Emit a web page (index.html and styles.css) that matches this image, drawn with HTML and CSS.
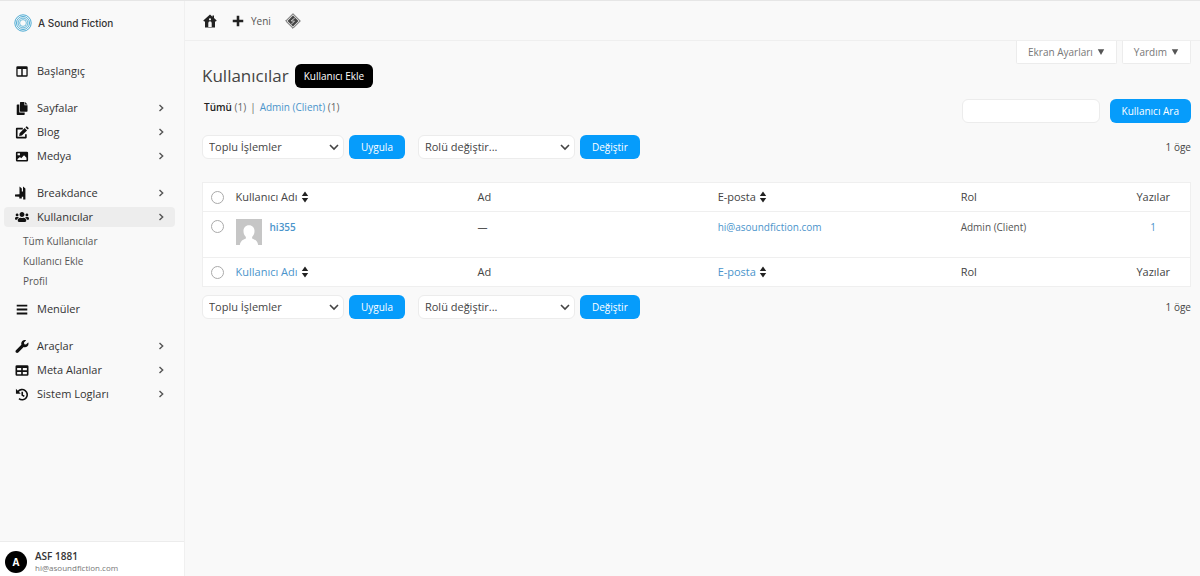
FILE: index.html
```html
<!DOCTYPE html>
<html lang="tr">
<head>
    <meta charset="UTF-8">
    <meta name="viewport" content="width=device-width, initial-scale=1.0">
    <title>Kullanıcılar - A Sound Fiction</title>
    <link rel="stylesheet" href="styles.css">
</head>
<body>
    <svg class="sprite" aria-hidden="true">
        <symbol id="chevron" viewBox="0 0 8 8"><path d="M2.500 1 5.700 4 2.500 7" fill="none" stroke="currentColor" stroke-width="1.4"/></symbol>
        <symbol id="arrow-down" viewBox="0 0 10 10"><path d="M1 3l4 4 4-4" fill="none" stroke="currentColor" stroke-width="1.6"/></symbol>
        <symbol id="sort" viewBox="0 0 8 12"><path d="M4 .5 7.200 5H.8zM4 11.500.8 7h6.400z"/></symbol>
        <symbol id="triangle" viewBox="0 0 8 8"><path d="M.8 1.200h6.400L4 7z"/></symbol>
    </svg>

    <div class="layout">
        <aside class="sidebar">
            <a class="brand" href="#">
                <svg class="brand-logo" viewBox="0 0 18 18">
                    <g fill="none" stroke="#3ba3cf">
                        <circle cx="9" cy="9" r="8.2" stroke-width=".9"/>
                        <circle cx="9" cy="9" r="6.5" stroke-width=".9"/>
                        <circle cx="9" cy="9" r="4.9" stroke-width=".8"/>
                        <circle cx="9" cy="9" r="3.4" stroke-width=".7"/>
                    </g>
                </svg>
                A Sound Fiction
            </a>

            <nav class="nav">
                <div class="nav-group">
                    <a class="nav-item" href="#">
                        <svg class="nav-icon" viewBox="0 0 16 16"><path fill-rule="evenodd" d="M2.500 1.500h11A1.500 1.500 0 0 1 15 3v10a1.500 1.500 0 0 1-1.500 1.500h-11A1.500 1.500 0 0 1 1 13V3a1.500 1.500 0 0 1 1.500-1.500zM2.600 4.800v7.900h4.500V4.800zM8.900 4.800v7.900h4.500V4.800z"/></svg>
                        <span>Başlangıç</span>
                    </a>
                </div>
                <div class="nav-group">
                    <a class="nav-item" href="#">
                        <svg class="nav-icon" viewBox="0 0 16 16"><path d="M6.300 0h4.700v4h3.800v7.200a.8.800 0 0 1-.8.800H6.300a.8.800 0 0 1-.8-.8V.800a.8.800 0 0 1 .8-.8zM11.800 0l3 3.200h-3zM2.300 3h2.400v9.800h6.600V15.200a.8.800 0 0 1-.8.800H2.300a.8.800 0 0 1-.8-.8V3.800a.8.800 0 0 1 .8-.8z"/></svg>
                        <span>Sayfalar</span>
                        <svg class="nav-arrow"><use href="#chevron"/></svg>
                    </a>
                    <a class="nav-item" href="#">
                        <svg class="nav-icon" viewBox="0 0 16 16"><path d="M9 3.300H1.500v11h11.300V10" fill="none" stroke="#111" stroke-width="2" stroke-linejoin="round"/><path d="M11.300 2.500l2.900 2.900-6.400 6.300-3.300.5.500-3.300zM12.200 1.600l.8-.8a1 1 0 0 1 1.500 0l1.300 1.300a1 1 0 0 1 0 1.500l-.8.800z"/></svg>
                        <span>Blog</span>
                        <svg class="nav-arrow"><use href="#chevron"/></svg>
                    </a>
                    <a class="nav-item" href="#">
                        <svg class="nav-icon" viewBox="0 0 16 16"><path fill-rule="evenodd" d="M2 2h12a1.500 1.500 0 0 1 1.500 1.500v9A1.500 1.500 0 0 1 14 14H2a1.500 1.500 0 0 1-1.500-1.500v-9A1.500 1.500 0 0 1 2 2zM2.500 12.200h11V9.500L10.500 6.500 7 10 5.500 8.500l-3 2.500zM2.500 4v2.500h3V4z"/></svg>
                        <span>Medya</span>
                        <svg class="nav-arrow"><use href="#chevron"/></svg>
                    </a>
                </div>
                <div class="nav-group">
                    <a class="nav-item" href="#">
                        <svg class="nav-icon nav-icon-tall" viewBox="0 0 14 14"><path d="M4.500.5 6.800 2.500V5.500h1.200V.5l2.400 2V13.500H8.200v-2.700H6.800v1.700H4.300v-1.700L0 10.600V8.600l4.500-.3z"/></svg>
                        <span>Breakdance</span>
                        <svg class="nav-arrow"><use href="#chevron"/></svg>
                    </a>
                    <a class="nav-item active" href="#" aria-current="page">
                        <svg class="nav-icon nav-icon-tall" viewBox="0 0 640 512"><path d="M96 224c35.300 0 64-28.700 64-64s-28.700-64-64-64-64 28.700-64 64 28.700 64 64 64zm448 0c35.300 0 64-28.700 64-64s-28.700-64-64-64-64 28.700-64 64 28.700 64 64 64zm32 32h-64c-17.600 0-33.500 7.100-45.100 18.600 40.300 22.100 68.900 62 75.100 109.400h66c17.700 0 32-14.300 32-32v-32c0-35.300-28.700-64-64-64zm-256 0c61.900 0 112-50.100 112-112S381.900 32 320 32 208 82.100 208 144s50.100 112 112 112zm76.800 32h-8.300c-20.800 10-43.900 16-68.500 16s-47.600-6-68.500-16h-8.300C179.600 288 128 339.600 128 403.200V432c0 26.500 21.500 48 48 48h288c26.500 0 48-21.500 48-48v-28.800c0-63.600-51.600-115.200-115.200-115.200zm-223.700-13.400C161.500 263.100 145.600 256 128 256H64c-35.300 0-64 28.700-64 64v32c0 17.700 14.300 32 32 32h65.900c6.300-47.400 34.900-87.300 75.200-109.400z"/></svg>
                        <span>Kullanıcılar</span>
                        <svg class="nav-arrow"><use href="#chevron"/></svg>
                    </a>
                    <div class="subnav">
                        <a href="#">Tüm Kullanıcılar</a>
                        <a href="#">Kullanıcı Ekle</a>
                        <a href="#">Profil</a>
                    </div>
                    <a class="nav-item" href="#">
                        <svg class="nav-icon" viewBox="0 0 16 16"><path d="M1.500 2h13v2.200h-13zM1.500 6.900h13v2.200h-13zM1.500 11.800h13V14h-13z"/></svg>
                        <span>Menüler</span>
                    </a>
                </div>
                <div class="nav-group">
                    <a class="nav-item" href="#">
                        <svg class="nav-icon" viewBox="0 0 512 512"><path d="M507.730 109.100c-2.240-9.030-13.540-12.090-20.120-5.510l-74.360 74.360-67.880-11.310-11.310-67.880 74.360-74.360c6.620-6.620 3.430-17.900-5.660-20.160-47.380-11.740-99.550.910-136.580 37.930-39.640 39.640-50.550 97.100-34.050 147.200L18.740 402.760c-24.990 24.990-24.990 65.510 0 90.500 24.990 24.990 65.510 24.990 90.500 0l213.210-213.210c50.120 16.710 107.470 5.680 147.370-34.220 37.070-37.070 49.700-89.320 37.910-136.730z"/></svg>
                        <span>Araçlar</span>
                        <svg class="nav-arrow"><use href="#chevron"/></svg>
                    </a>
                    <a class="nav-item" href="#">
                        <svg class="nav-icon" viewBox="0 0 16 16"><path fill-rule="evenodd" d="M1.700 1.500h12.600A1.700 1.700 0 0 1 16 3.200v9.600a1.700 1.700 0 0 1-1.700 1.700H1.700A1.700 1.700 0 0 1 0 12.800V3.200a1.700 1.700 0 0 1 1.700-1.700zM2 5v2.700h5V5zM9 5v2.700h5V5zM2 9.700v2.800h5V9.700zM9 9.700v2.800h5V9.700z"/></svg>
                        <span>Meta Alanlar</span>
                        <svg class="nav-arrow"><use href="#chevron"/></svg>
                    </a>
                    <a class="nav-item" href="#">
                        <svg class="nav-icon" viewBox="0 0 16 16"><path d="M3 4.600A6.300 6.300 0 1 1 4.300 13.200M8.300 4.500V8.600l2.500 1.700" fill="none" stroke="#111" stroke-width="2"/><path d="M.5 1v6h6z"/></svg>
                        <span>Sistem Logları</span>
                        <svg class="nav-arrow"><use href="#chevron"/></svg>
                    </a>
                </div>
            </nav>

            <div class="account">
                <div class="account-badge">A</div>
                <div>
                    <div class="account-name">ASF 1881</div>
                    <div class="account-mail">hi@asoundfiction.com</div>
                </div>
            </div>
        </aside>

        <div class="page">
            <header class="topbar">
                <a href="#" aria-label="Ana sayfa">
                    <svg class="icon-home" viewBox="0 0 14 14"><path fill-rule="evenodd" d="M7 .5l2.500 2.300V1.500H11v2.600l2.700 2.500-1 1.100L12 7v6.500H2V7l-.7.700-1-1.100zM5.300 13h3.400V9a1.700 1.700 0 0 0-3.400 0zM7 4.200a1.100 1.100 0 1 0 0 2.200 1.100 1.100 0 0 0 0-2.200z"/></svg>
                </a>
                <a class="topbar-new" href="#">
                    <svg class="icon-plus" viewBox="0 0 12 12"><path d="M4.900 1.500h2.200v3.400h3.400v2.200H7.100v3.400H4.900V7.100H1.500V4.900h3.400z"/></svg>
                    Yeni
                </a>
                <a href="#" aria-label="Önbellek">
                    <svg class="icon-diamond" viewBox="0 0 16 16"><path d="M8 .7 15.300 8 8 15.300.7 8z" fill="#ddd" stroke="#555" stroke-width=".9"/><path d="M8 2.600 13.400 8 8 13.400 2.600 8z" fill="#444"/><path d="M9.800 5 6.200 7.800l3.300.5-3.300 2.900" fill="none" stroke="#ccc" stroke-width="1"/></svg>
                </a>
            </header>

            <main class="content">
                <div class="screen-meta">
                    <button class="meta-tab" type="button">Ekran Ayarları <svg><use href="#triangle"/></svg></button>
                    <button class="meta-tab" type="button">Yardım <svg><use href="#triangle"/></svg></button>
                </div>

                <div class="heading">
                    <h1>Kullanıcılar</h1>
                    <a class="add-user" href="#">Kullanıcı Ekle</a>
                </div>

                <div class="filters">
                    <div class="views">
                        <span><a class="current" href="#">Tümü</a> (1)</span>
                        <span>|</span>
                        <span><a href="#">Admin (Client)</a> (1)</span>
                    </div>
                    <form class="search">
                        <input type="search" aria-label="Kullanıcı Ara">
                        <button class="button" type="button">Kullanıcı Ara</button>
                    </form>
                </div>

                <div class="tablenav">
                    <div class="select select-bulk">
                        <select aria-label="Toplu işlem seçin"><option>Toplu İşlemler</option></select>
                        <svg><use href="#arrow-down"/></svg>
                    </div>
                    <button class="button" type="button">Uygula</button>
                    <div class="select select-role">
                        <select aria-label="Rolü değiştir"><option>Rolü değiştir...</option></select>
                        <svg><use href="#arrow-down"/></svg>
                    </div>
                    <button class="button" type="button">Değiştir</button>
                    <span class="count">1 öge</span>
                </div>

                <table class="users">
                    <colgroup>
                        <col class="col-check">
                        <col class="col-name">
                        <col class="col-first">
                        <col class="col-mail">
                        <col>
                        <col class="col-posts">
                    </colgroup>
                    <thead>
                        <tr>
                            <td><input type="checkbox" aria-label="Tümünü seç"></td>
                            <th><a href="#">Kullanıcı Adı <svg><use href="#sort"/></svg></a></th>
                            <th>Ad</th>
                            <th><a href="#">E-posta <svg><use href="#sort"/></svg></a></th>
                            <th>Rol</th>
                            <th class="posts">Yazılar</th>
                        </tr>
                    </thead>
                    <tbody>
                        <tr>
                            <td><input type="checkbox" aria-label="hi355 kullanıcısını seç"></td>
                            <td>
                                <div class="user">
                                    <svg class="avatar" viewBox="0 0 25 25"><path fill="#c6c6c6" d="M0 0h25v25H0z"/><path fill="#fff" d="M12.500 6c3.300 0 5.300 2.400 5.300 5.600 0 2.600-1 4.500-2.300 5.700v1.500c2.800 1 5.200 2.300 5.800 6.200H3.700c.6-3.900 3-5.200 5.800-6.200v-1.500c-1.300-1.200-2.300-3.100-2.300-5.700C7.200 8.400 9.200 6 12.500 6z"/></svg>
                                    <a class="username" href="#">hi355</a>
                                </div>
                            </td>
                            <td>—</td>
                            <td><a href="#">hi@asoundfiction.com</a></td>
                            <td>Admin (Client)</td>
                            <td class="posts"><a href="#">1</a></td>
                        </tr>
                    </tbody>
                    <tfoot>
                        <tr>
                            <td><input type="checkbox" aria-label="Tümünü seç"></td>
                            <th><a href="#">Kullanıcı Adı <svg><use href="#sort"/></svg></a></th>
                            <th>Ad</th>
                            <th><a href="#">E-posta <svg><use href="#sort"/></svg></a></th>
                            <th>Rol</th>
                            <th class="posts">Yazılar</th>
                        </tr>
                    </tfoot>
                </table>

                <div class="tablenav">
                    <div class="select select-bulk">
                        <select aria-label="Toplu işlem seçin"><option>Toplu İşlemler</option></select>
                        <svg><use href="#arrow-down"/></svg>
                    </div>
                    <button class="button" type="button">Uygula</button>
                    <div class="select select-role">
                        <select aria-label="Rolü değiştir"><option>Rolü değiştir...</option></select>
                        <svg><use href="#arrow-down"/></svg>
                    </div>
                    <button class="button" type="button">Değiştir</button>
                    <span class="count">1 öge</span>
                </div>
            </main>
        </div>
    </div>
</body>
</html>
```
FILE: styles.css
```css
* {
    margin: 0;
    padding: 0;
    box-sizing: border-box;
}
body {
    font-family: "Open Sans", "Noto Sans", sans-serif;
    font-size: 10px;
    line-height: 16px;
    background: #f9f9f9;
    color: #555;
}
a {
    color: #4a94cb;
    text-decoration: none;
}
button, input, select {
    font: inherit;
}
svg {
    fill: currentColor;
    flex-shrink: 0;
}
.sprite {
    display: none;
}
.layout {
    display: grid;
    grid-template-columns: 185px 1fr;
    min-height: 100vh;
    border-top: 1px solid #e6e6e6;
}

/* Sidebar */
.sidebar {
    display: flex;
    flex-direction: column;
    border-right: 1px solid #f0f0f0;
}
.brand {
    display: flex;
    align-items: center;
    gap: 6px;
    height: 44px;
    padding-left: 14px;
    font-family: Inter, sans-serif;
    font-weight: 500;
    color: #333;
}
.brand-logo {
    width: 18px;
    height: 18px;
}
.nav {
    display: flex;
    flex-direction: column;
    gap: 17px;
    padding: 16px 9px 16px 4px;
}
.nav-group {
    display: flex;
    flex-direction: column;
    gap: 4px;
}
.nav-item {
    display: flex;
    align-items: center;
    gap: 8px;
    height: 20px;
    padding: 0 10px 0 11px;
    border-radius: 4px;
    font-size: 11px;
    color: #333;
}
.nav-item.active {
    background: #ededed;
}
.nav-icon {
    width: 14px;
    height: 13px;
    color: #111;
}
.nav-icon-tall {
    height: 14px;
}
.nav-arrow {
    width: 8px;
    height: 8px;
    margin-left: auto;
    color: #555;
}
.subnav {
    display: flex;
    flex-direction: column;
    gap: 4px;
    padding: 2px 0 6px 19px;
}
.subnav a {
    color: #555;
}
.account {
    display: flex;
    align-items: center;
    gap: 8px;
    height: 35px;
    margin-top: auto;
    padding: 6px 5px 0;
    background: #fff;
    border-top: 1px solid #ececec;
    line-height: 12px;
}
.account-badge {
    width: 22px;
    height: 22px;
    border-radius: 50%;
    background: #000;
    color: #fff;
    font-weight: bold;
    line-height: 22px;
    text-align: center;
}
.account-name {
    font-weight: 600;
    color: #333;
}
.account-mail {
    font-size: 8px;
    color: #777;
}

/* Top bar */
.topbar {
    display: flex;
    align-items: center;
    gap: 14px;
    height: 40px;
    padding-left: 18px;
    border-bottom: 1px solid #efefef;
}
.topbar a {
    display: flex;
    align-items: center;
    gap: 6px;
    color: #222;
}
.topbar .topbar-new {
    color: #555;
}
.icon-home {
    width: 14px;
    height: 14px;
}
.icon-plus {
    width: 14px;
    height: 14px;
    color: #222;
}
.icon-diamond {
    width: 16px;
    height: 16px;
}

/* Content */
.content {
    padding: 0 9px 0 17px;
}
.screen-meta {
    display: flex;
    justify-content: flex-end;
    gap: 5px;
}
.meta-tab {
    display: flex;
    align-items: center;
    gap: 4px;
    height: 23px;
    padding: 0 11px;
    background: #fff;
    border: 1px solid #ececec;
    border-top: none;
    border-radius: 0 0 2px 2px;
    color: #777;
}
.meta-tab svg {
    width: 8px;
    height: 8px;
    color: #555;
}
.heading {
    display: flex;
    align-items: center;
    gap: 6px;
}
.heading h1 {
    font-size: 17px;
    font-weight: normal;
    line-height: 24px;
    color: #444;
}
.add-user {
    height: 24px;
    padding: 0 9px;
    border-radius: 6px;
    background: #000;
    color: #fff;
    line-height: 24px;
}
.filters {
    display: flex;
    justify-content: space-between;
    margin: 11px 0 12px;
}
.views {
    display: flex;
    gap: 4px;
    padding-left: 2px;
    color: #666;
}
.views .current {
    font-weight: 600;
    color: #222;
}
.search {
    display: flex;
    gap: 10px;
}
.search input {
    width: 138px;
    height: 24px;
    padding: 0 6px;
    background: #fff;
    border: 1px solid #ececec;
    border-radius: 6px;
}
.button {
    height: 24px;
    padding: 0 12px;
    background: #069cfb;
    border: none;
    border-radius: 6px;
    color: #fff;
    cursor: pointer;
}
.tablenav {
    display: flex;
    align-items: center;
    gap: 5px;
}
.select {
    position: relative;
}
.select-bulk {
    width: 142px;
}
.select-role {
    width: 157px;
    margin-left: 8px;
}
.select select {
    width: 100%;
    height: 24px;
    padding: 0 6px;
    appearance: none;
    background: #fff;
    border: 1px solid #ececec;
    border-radius: 6px;
    font-size: 11px;
    color: #444;
}
.select svg {
    position: absolute;
    top: 7px;
    right: 5px;
    width: 10px;
    height: 10px;
    color: #444;
    pointer-events: none;
}
.count {
    margin-left: auto;
    color: #444;
}

/* Users table */
.users {
    width: 100%;
    margin: 23px 0 8px;
    table-layout: fixed;
    border-collapse: collapse;
    background: #fff;
    border: 1px solid #efefef;
}
.col-check {
    width: 33px;
}
.col-name {
    width: 24.5%;
}
.col-first {
    width: 24.3%;
}
.col-mail {
    width: 24.6%;
}
.col-posts {
    width: 7.5%;
}
.users tr {
    border-bottom: 1px solid #efefef;
}
.users th {
    height: 29px;
    font-size: 11px;
    font-weight: normal;
    text-align: left;
    color: #444;
}
.users th a {
    display: flex;
    align-items: center;
    gap: 3px;
}
.users thead a {
    color: #444;
}
.users th svg {
    width: 8px;
    height: 12px;
    color: #222;
}
.users input {
    display: block;
    width: 13px;
    height: 13px;
    margin-left: 8px;
    appearance: none;
    background: #fff;
    border: 1px solid #aaa;
    border-radius: 50%;
}
.users tbody td {
    height: 46px;
    padding-top: 7px;
    vertical-align: top;
}
.users tbody input {
    margin-top: 1px;
}
.users .posts {
    text-align: center;
}
.user {
    display: flex;
    gap: 8px;
}
.avatar {
    width: 26px;
    height: 26px;
}
.username {
    font-weight: 600;
}
```
